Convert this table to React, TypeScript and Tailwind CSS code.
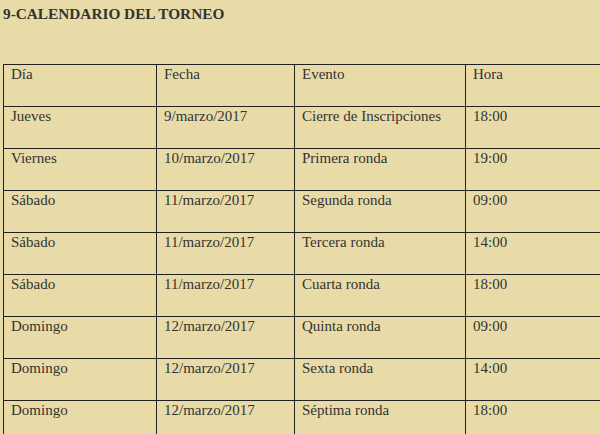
const rows = [
  ["Jueves", "9/marzo/2017", "Cierre de Inscripciones", "18:00"],
  ["Viernes", "10/marzo/2017", "Primera ronda", "19:00"],
  ["Sábado", "11/marzo/2017", "Segunda ronda", "09:00"],
  ["Sábado", "11/marzo/2017", "Tercera ronda", "14:00"],
  ["Sábado", "11/marzo/2017", "Cuarta ronda", "18:00"],
  ["Domingo", "12/marzo/2017", "Quinta ronda", "09:00"],
  ["Domingo", "12/marzo/2017", "Sexta ronda", "14:00"],
  ["Domingo", "12/marzo/2017", "Séptima ronda", "18:00"],
];

const cell = "border border-[#222] h-[42px] align-top pl-[7px] pt-[1px] text-[15px] leading-[17px] text-[#333]";

export default function App() {
  return (
    <div className="w-[600px] h-[434px] overflow-hidden bg-[#e8dba7] font-['Liberation_Serif',serif]">
      <h2 className="pl-[3px] pt-[5px] text-[15.3px] leading-[17px] font-bold text-[#333]">
        9-CALENDARIO DEL TORNEO
      </h2>
      <table className="mt-[42px] ml-[3px] w-[720px] border-collapse table-fixed">
        <colgroup>
          <col className="w-[153px]" />
          <col className="w-[138px]" />
          <col className="w-[171px]" />
          <col />
        </colgroup>
        <tbody>
          <tr>
            <td className={cell}>Día</td>
            <td className={cell}>Fecha</td>
            <td className={cell}>Evento</td>
            <td className={cell}>Hora</td>
          </tr>
          {rows.map((r, i) => (
            <tr key={i}>
              {r.map((c, j) => (
                <td key={j} className={cell}>
                  {c}
                </td>
              ))}
            </tr>
          ))}
        </tbody>
      </table>
    </div>
  );
}
